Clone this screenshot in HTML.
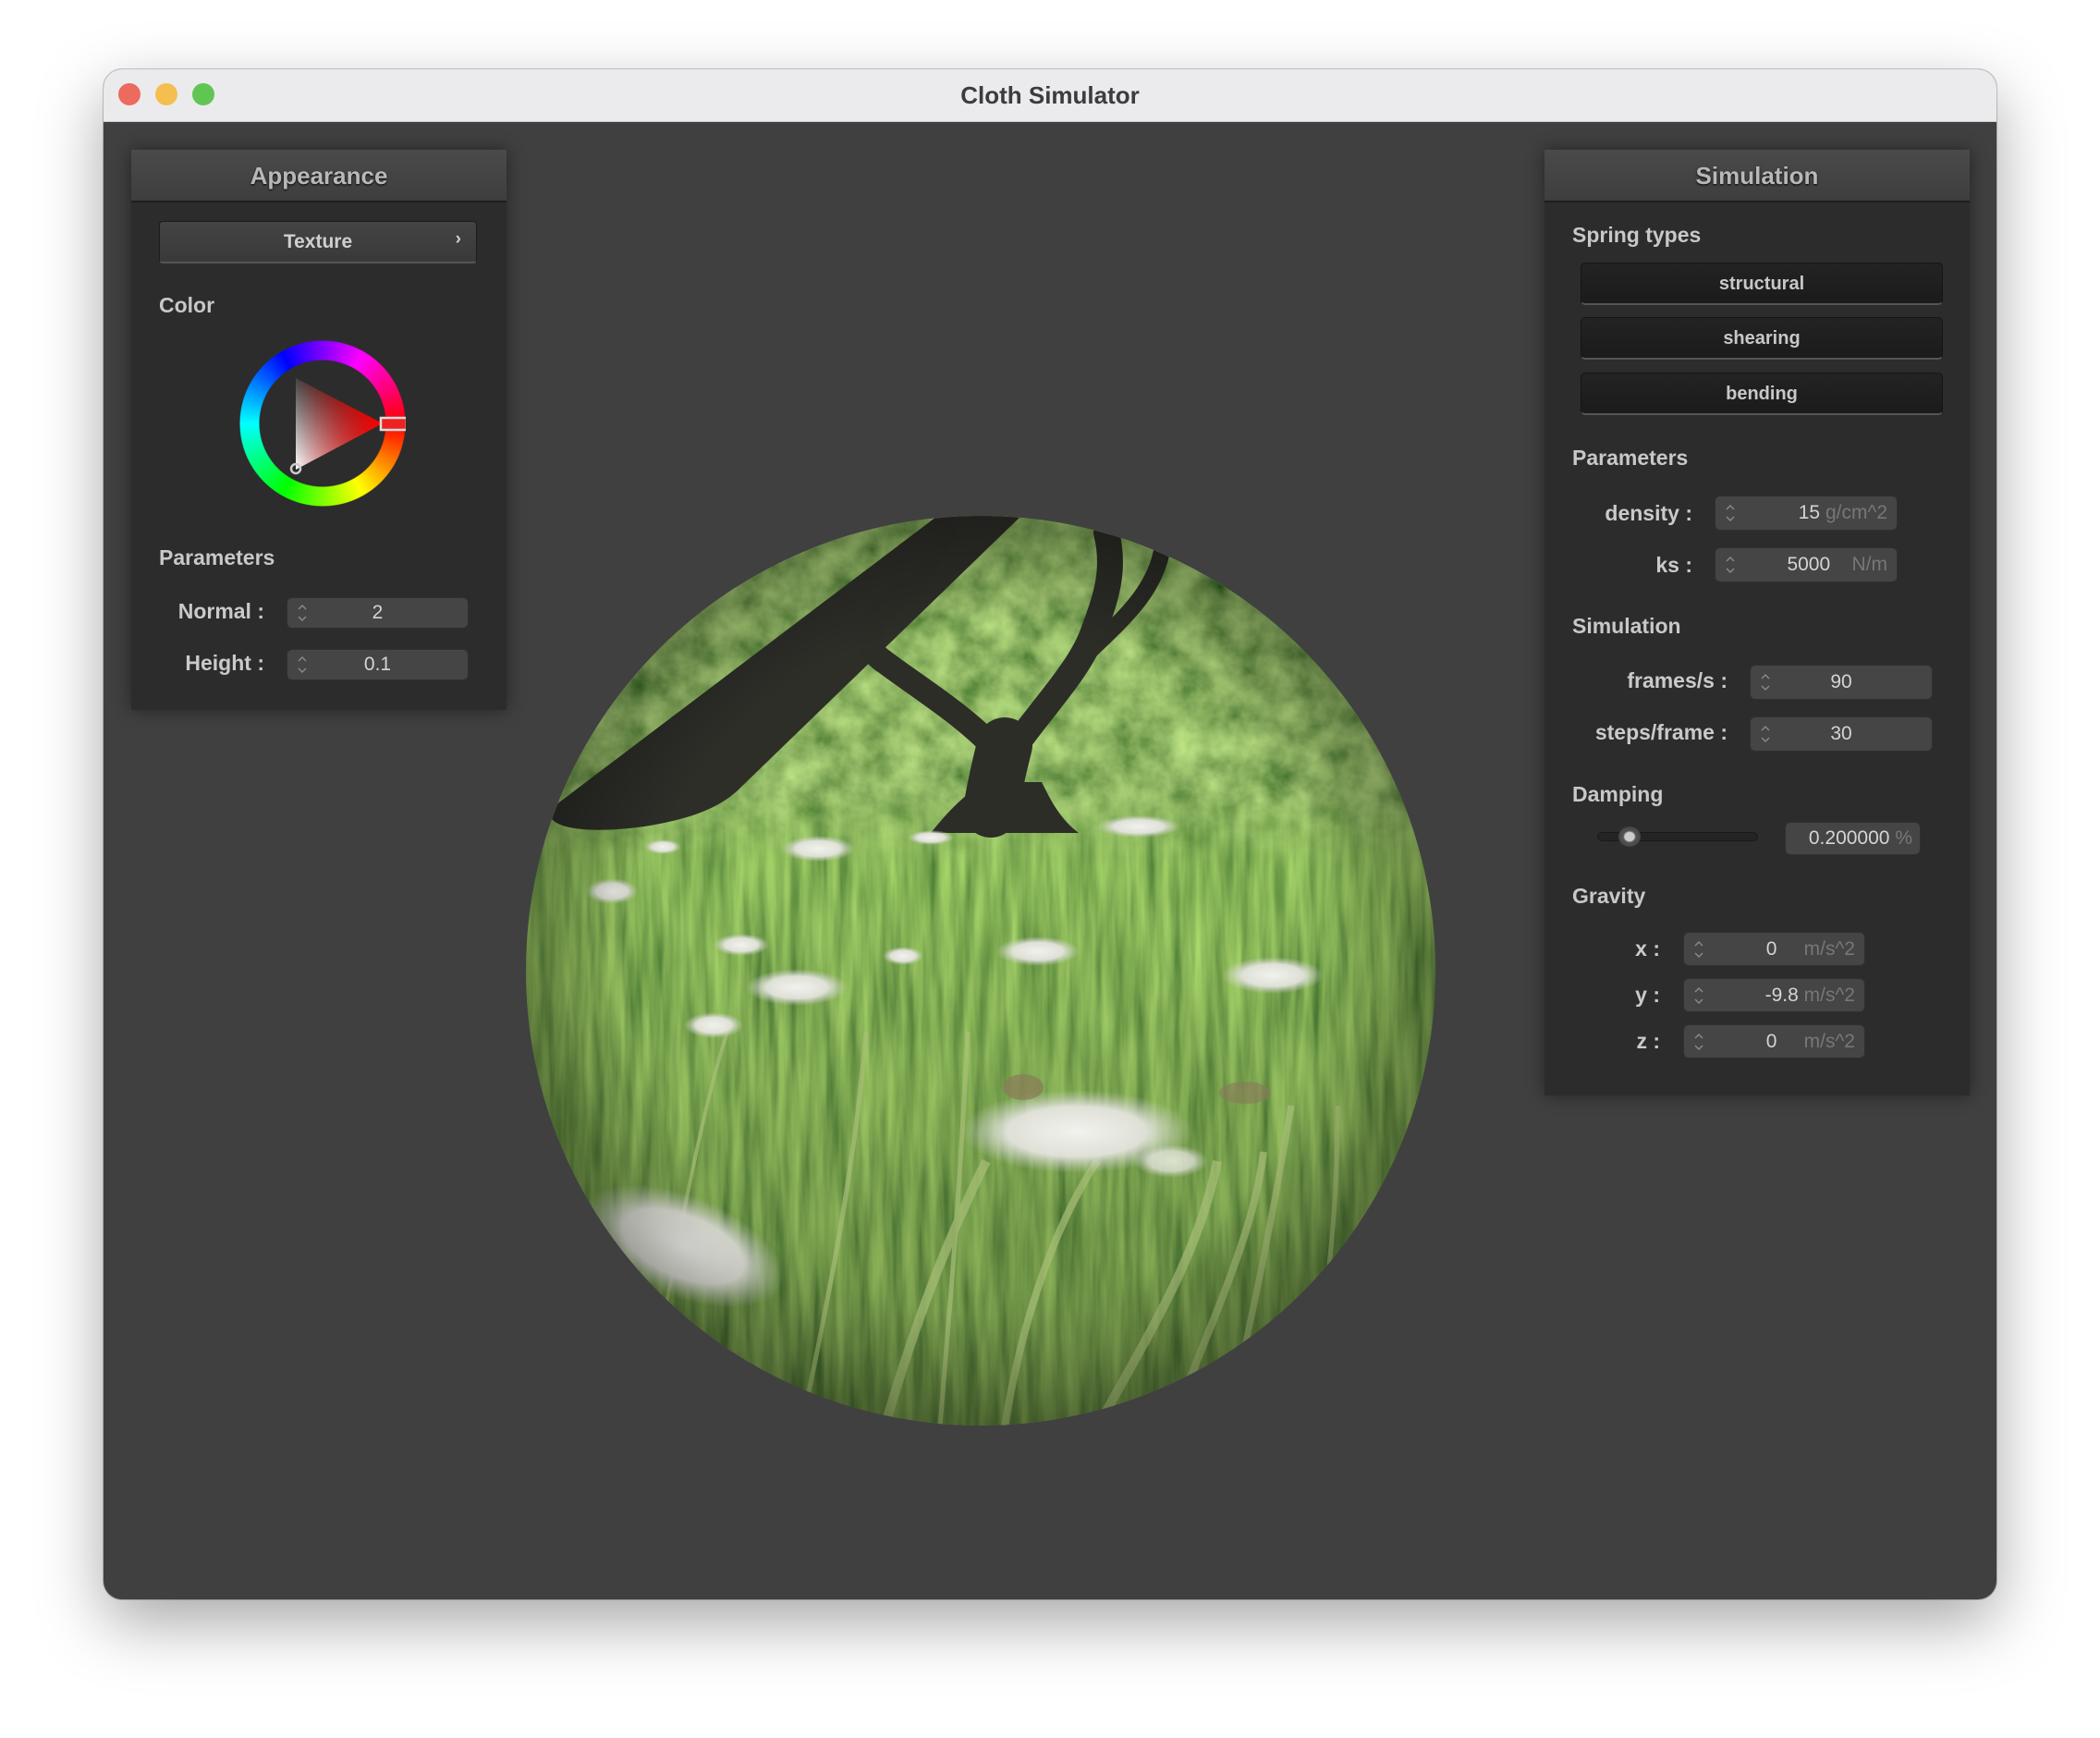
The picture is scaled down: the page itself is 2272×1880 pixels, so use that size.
<!DOCTYPE html>
<html><head><meta charset="utf-8"><style>
*{margin:0;padding:0;box-sizing:border-box}
body{width:2272px;height:1880px;background:#fff;position:relative;overflow:hidden;font-family:"Liberation Sans",sans-serif}
.win{position:absolute;left:112px;top:75px;width:2048px;height:1655px;border-radius:20px;overflow:hidden;background:#404040;box-shadow:0 25px 70px rgba(0,0,0,.35),0 0 0 1px rgba(0,0,0,.2)}
.tb{position:absolute;left:0;top:0;width:100%;height:57px;background:#ebebed;border-bottom:1px solid #cfcfcf;text-align:center;line-height:57px;font-weight:bold;font-size:26px;color:#3c3c3c}
.dot{position:absolute;top:15px;width:24px;height:24px;border-radius:50%}
.a{position:absolute}
.panel{position:absolute;background:#2c2c2c;box-shadow:0 0 18px rgba(0,0,0,.45)}
.hdr{position:absolute;left:0;top:0;width:100%;height:57px;background:linear-gradient(#4a4a4a,#3e3e3e);border-bottom:2px solid #1e1e1e;text-align:center;line-height:56px;color:#b8b8b8;font-size:26px;font-weight:bold;text-shadow:0 1px 2px #000}
.lbl{position:absolute;color:#c8c8c8;font-weight:bold;font-size:23px}
.rl{position:absolute;color:#cacaca;font-weight:bold;font-size:23px;text-align:right}
.fld{position:absolute;background:#454545;border-radius:6px;border:1px solid #303030;color:#d4d4d4;font-size:21px}
.fld .v{position:absolute;top:0;height:100%;display:flex;align-items:center}
.fld .u{color:#777}
.sp{position:absolute;left:10px;top:50%;margin-top:-11px;width:12px;height:22px}
.btn{position:absolute;background:linear-gradient(#232323,#1b1b1b);border-radius:5px;border:1px solid #151515;border-bottom:2px solid #555;color:#c8c8c8;font-weight:bold;font-size:20px;text-align:center}
</style></head><body>
<svg width="0" height="0" style="position:absolute"><defs><symbol id="ar" viewBox="0 0 12 22"><path d="M2 7 6 3 10 7M2 15 6 19 10 15" fill="none" stroke="#8a8a8a" stroke-width="1.4"/></symbol></defs></svg>
<div class="win">
 <div class="tb">Cloth Simulator
  <div class="dot" style="left:16px;background:#ed6a5e"></div>
  <div class="dot" style="left:56px;background:#f5bf4f"></div>
  <div class="dot" style="left:96px;background:#61c554"></div>
 </div>
</div>

<!-- Left panel -->
<div class="panel" style="left:142px;top:162px;width:406px;height:606px">
 <div class="hdr">Appearance</div>
 <div class="a" style="left:30px;top:77px;width:344px;height:46px;background:linear-gradient(#444,#393939);border:1px solid #1c1c1c;border-bottom:2px solid #555;border-radius:4px;color:#cfcfcf;font-size:21px;font-weight:bold;text-align:center;line-height:44px">Texture<span style="position:absolute;right:16px;top:-3px;font-size:19px">›</span></div>
 <div class="lbl" style="left:30px;top:155px">Color</div>
 <svg class="a" style="left:117px;top:206px" width="180" height="180" viewBox="0 0 180 180">
  <defs>
   <linearGradient id="tw" x1="0" y1="1" x2="0.6" y2="0"><stop offset="0" stop-color="#fff"/><stop offset="1" stop-color="#000"/></linearGradient>
   <linearGradient id="tr" x1="0" y1="0" x2="1" y2="0"><stop offset="0" stop-color="#f00" stop-opacity="0"/><stop offset="1" stop-color="#f00"/></linearGradient>
  </defs>
  <foreignObject x="0" y="0" width="180" height="180">
   <div xmlns="http://www.w3.org/1999/xhtml" style="width:180px;height:180px;border-radius:50%;background:conic-gradient(from 90deg,#f00,#ff0 60deg,#0f0 120deg,#0ff 180deg,#00f 240deg,#f0f 300deg,#f00 360deg);-webkit-mask:radial-gradient(circle,transparent 68px,#000 69px,#000 89px,transparent 90px);mask:radial-gradient(circle,transparent 68px,#000 69px,#000 89px,transparent 90px)"></div>
  </foreignObject>
  <polygon points="61,41 155,90 61,140" fill="url(#tw)"/>
  <polygon points="61,41 155,90 61,140" fill="url(#tr)"/>
  <circle cx="61" cy="139" r="5" fill="none" stroke="#ccc" stroke-width="2.5"/>
  <rect x="153" y="84" width="28" height="13" fill="#e22" stroke="#ddd" stroke-width="2.5"/>
 </svg>
 <div class="lbl" style="left:30px;top:428px">Parameters</div>
 <div class="rl" style="left:20px;width:124px;top:486px">Normal :</div>
 <div class="fld" style="left:168px;top:484px;width:197px;height:34px"><svg class="sp"><use href="#ar"/></svg><div class="v" style="left:0;width:100%;justify-content:center">2</div></div>
 <div class="rl" style="left:20px;width:124px;top:542px">Height :</div>
 <div class="fld" style="left:168px;top:540px;width:197px;height:34px"><svg class="sp"><use href="#ar"/></svg><div class="v" style="left:0;width:100%;justify-content:center">0.1</div></div>
</div>

<!-- Sphere -->
<svg class="a" style="left:567px;top:556px" width="988" height="988" viewBox="0 0 988 988">
 <defs>
  <clipPath id="c"><circle cx="494" cy="494" r="492"/></clipPath>
  <filter id="leaf" x="0" y="0" width="100%" height="100%">
   <feTurbulence type="fractalNoise" baseFrequency="0.03" numOctaves="4" seed="3"/>
   <feColorMatrix values="0.55 0 0 0 0.0  0.7 0 0 0 0.12  0.25 0 0 0 0.0  0 0 0 0 1"/>
  </filter>
  <filter id="grass" x="0" y="0" width="100%" height="100%">
   <feTurbulence type="fractalNoise" baseFrequency="0.08 0.007" numOctaves="3" seed="7"/>
   <feColorMatrix values="0.45 0 0 0 0.02  0.65 0 0 0 0.14  0.15 0 0 0 0.02  0 0 0 0 1"/>
  </filter>
  <linearGradient id="fade" x1="0" y1="0" x2="0" y2="1"><stop offset="0.8" stop-color="#fff"/><stop offset="1" stop-color="#000"/></linearGradient>
  <mask id="m"><rect width="988" height="380" fill="url(#fade)"/></mask>
  <linearGradient id="dk" x1="0" y1="0" x2="0" y2="1"><stop offset="0.4" stop-color="#000" stop-opacity="0"/><stop offset="1" stop-color="#000" stop-opacity=".25"/></linearGradient>
  <radialGradient id="dn"><stop offset="0" stop-color="#f2f2ee"/><stop offset="0.6" stop-color="#e4e4de" stop-opacity=".95"/><stop offset="1" stop-color="#ccc" stop-opacity="0"/></radialGradient>
  <radialGradient id="vig"><stop offset="0.75" stop-color="#000" stop-opacity="0"/><stop offset="1" stop-color="#000" stop-opacity=".3"/></radialGradient>
 </defs>
 <g clip-path="url(#c)">
  <rect width="988" height="988" filter="url(#grass)"/>
  <rect width="988" height="988" fill="url(#dk)"/>
  <g mask="url(#m)"><rect width="988" height="380" filter="url(#leaf)"/></g>
  <path d="M930 260C960 300 975 340 988 380V150C960 180 940 220 930 260Z" fill="#8ab8ea" opacity=".8"/>
  <path d="M0 300C30 240 60 190 90 150 60 230 40 290 30 330Z" fill="#8ab8ea" opacity=".8"/>
  <path d="M680 10C740 40 800 90 860 150 880 170 900 190 910 200 880 140 830 70 760 20Z" fill="#8ab8ea" opacity=".6"/>
  <path d="M30 330C40 342 80 345 130 338 180 330 210 318 230 300L540 0H450L30 318Z" fill="#2d2e28"/>
  <g fill="none" stroke="#2c2d27" stroke-linecap="round">
   <path d="M505 320C510 290 515 270 520 250" stroke-width="60"/>
   <path d="M515 260C480 220 430 190 390 160 360 140 370 110 420 80" stroke-width="26"/>
   <path d="M525 260C560 210 600 170 615 130 630 90 640 60 630 20" stroke-width="28"/>
   <path d="M600 160C640 120 680 90 690 40" stroke-width="18"/>
   <path d="M420 80C440 60 450 40 460 20" stroke-width="14"/>
  </g>
  <path d="M440 345C460 320 480 300 500 290L560 290C570 310 580 330 600 345Z" fill="#2c2d27"/>
  <g stroke="#a8bf78" fill="none" opacity=".7">
   <path d="M130 988C160 820 190 650 220 560" stroke-width="4"/>
   <path d="M300 988C340 800 360 680 370 560" stroke-width="5"/>
   <path d="M390 988C430 850 470 760 500 700" stroke-width="10"/>
   <path d="M520 988C540 860 580 760 620 700" stroke-width="8"/>
   <path d="M620 988C680 880 730 800 750 700" stroke-width="10"/>
   <path d="M700 988C740 880 790 780 800 690" stroke-width="8"/>
   <path d="M840 988C870 860 880 760 880 640" stroke-width="5"/>
   <path d="M760 988C790 860 810 760 830 640" stroke-width="7"/>
   <path d="M450 988C460 860 470 760 480 560" stroke-width="5"/>
  </g>
  <ellipse cx="172" cy="792" rx="115" ry="55" fill="url(#dn)" transform="rotate(22 172 792)"/>
  <ellipse cx="598" cy="668" rx="125" ry="45" fill="url(#dn)"/>
  <ellipse cx="700" cy="700" rx="40" ry="18" fill="url(#dn)" opacity=".8"/>
  <ellipse cx="295" cy="512" rx="55" ry="20" fill="url(#dn)"/>
  <ellipse cx="556" cy="473" rx="45" ry="16" fill="url(#dn)"/>
  <ellipse cx="810" cy="499" rx="55" ry="20" fill="url(#dn)"/>
  <ellipse cx="95" cy="408" rx="28" ry="14" fill="url(#dn)"/>
  <ellipse cx="205" cy="553" rx="32" ry="14" fill="url(#dn)"/>
  <ellipse cx="318" cy="362" rx="40" ry="14" fill="url(#dn)"/>
  <ellipse cx="665" cy="338" rx="45" ry="12" fill="url(#dn)"/>
  <ellipse cx="235" cy="466" rx="30" ry="12" fill="url(#dn)"/>
  <ellipse cx="410" cy="478" rx="22" ry="10" fill="url(#dn)"/>
  <ellipse cx="150" cy="360" rx="20" ry="8" fill="url(#dn)"/>
  <ellipse cx="440" cy="350" rx="25" ry="8" fill="url(#dn)"/>
  <ellipse cx="540" cy="620" rx="22" ry="14" fill="#8b7a5a" opacity=".7"/>
  <ellipse cx="780" cy="626" rx="28" ry="12" fill="#8b7a5a" opacity=".6"/>
  <rect width="988" height="988" fill="url(#vig)"/>
 </g>
</svg>

<!-- Right panel -->
<div class="panel" style="left:1671px;top:162px;width:460px;height:1023px">
 <div class="hdr">Simulation</div>
 <div class="lbl" style="left:30px;top:79px">Spring types</div>
 <div class="btn" style="left:39px;top:122px;width:392px;height:46px;line-height:44px">structural</div>
 <div class="btn" style="left:39px;top:181px;width:392px;height:46px;line-height:44px">shearing</div>
 <div class="btn" style="left:39px;top:241px;width:392px;height:46px;line-height:44px">bending</div>
 <div class="lbl" style="left:30px;top:320px">Parameters</div>
 <div class="rl" style="left:0;width:160px;top:380px">density :</div>
 <div class="fld" style="left:184px;top:374px;width:198px;height:38px"><svg class="sp"><use href="#ar"/></svg><div class="v" style="right:10px">15&nbsp;<span class="u">g/cm^2</span></div></div>
 <div class="rl" style="left:0;width:160px;top:436px">ks :</div>
 <div class="fld" style="left:184px;top:430px;width:198px;height:38px"><svg class="sp"><use href="#ar"/></svg><div class="v" style="right:10px">5000&nbsp;&nbsp;&nbsp;&nbsp;<span class="u">N/m</span></div></div>
 <div class="lbl" style="left:30px;top:502px">Simulation</div>
 <div class="rl" style="left:0;width:198px;top:561px">frames/s :</div>
 <div class="fld" style="left:222px;top:557px;width:198px;height:38px"><svg class="sp"><use href="#ar"/></svg><div class="v" style="left:0;width:100%;justify-content:center">90</div></div>
 <div class="rl" style="left:0;width:198px;top:617px">steps/frame :</div>
 <div class="fld" style="left:222px;top:613px;width:198px;height:38px"><svg class="sp"><use href="#ar"/></svg><div class="v" style="left:0;width:100%;justify-content:center">30</div></div>
 <div class="lbl" style="left:30px;top:684px">Damping</div>
 <div class="a" style="left:57px;top:738px;width:174px;height:10px;border-radius:5px;background:#242424;border:1px solid #1a1a1a"></div>
 <div class="a" style="left:80px;top:732px;width:24px;height:22px;border-radius:50%;background:radial-gradient(#ccc 30%,#555 40%,#333)"></div>
 <div class="fld" style="left:260px;top:727px;width:147px;height:36px"><div class="v" style="right:8px">0.200000&nbsp;<span class="u">%</span></div></div>
 <div class="lbl" style="left:30px;top:794px">Gravity</div>
 <div class="rl" style="left:0;width:125px;top:851px">x :</div>
 <div class="fld" style="left:150px;top:846px;width:197px;height:37px"><svg class="sp"><use href="#ar"/></svg><div class="v" style="right:10px">0&nbsp;&nbsp;&nbsp;&nbsp;&nbsp;<span class="u">m/s^2</span></div></div>
 <div class="rl" style="left:0;width:125px;top:901px">y :</div>
 <div class="fld" style="left:150px;top:896px;width:197px;height:37px"><svg class="sp"><use href="#ar"/></svg><div class="v" style="right:10px">-9.8&nbsp;<span class="u">m/s^2</span></div></div>
 <div class="rl" style="left:0;width:125px;top:951px">z :</div>
 <div class="fld" style="left:150px;top:946px;width:197px;height:37px"><svg class="sp"><use href="#ar"/></svg><div class="v" style="right:10px">0&nbsp;&nbsp;&nbsp;&nbsp;&nbsp;<span class="u">m/s^2</span></div></div>
</div>
</body></html>
